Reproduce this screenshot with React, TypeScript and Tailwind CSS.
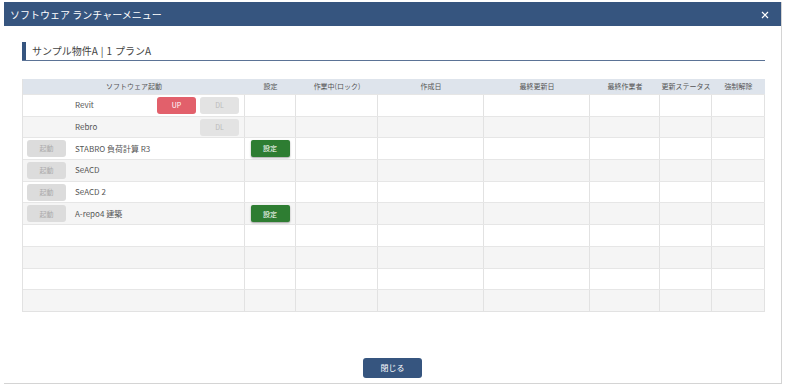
import React from "react";

const font = { fontFamily: '"Noto Sans CJK JP", "Noto Sans", sans-serif' };

type Row = { name?: string; launch?: boolean; up?: boolean; dl?: boolean; setting?: boolean };

const rows: Row[] = [
  { name: "Revit", up: true, dl: true },
  { name: "Rebro", dl: true },
  { name: "STABRO 負荷計算 R3", launch: true, setting: true },
  { name: "SeACD", launch: true },
  { name: "SeACD 2", launch: true },
  { name: "A-repo4 建築", launch: true, setting: true },
  {},
  {},
  {},
  {},
];

const cols = [
  { label: "ソフトウェア起動", w: "w-[222px]" },
  { label: "設定", w: "w-[51px]" },
  { label: "作業中(ロック)", w: "w-[82px]" },
  { label: "作成日", w: "w-[106px]" },
  { label: "最終更新日", w: "w-[106px]" },
  { label: "最終作業者", w: "w-[70px]" },
  { label: "更新ステータス", w: "w-[52px]" },
  { label: "強制解除", w: "flex-1" },
];

export default function App() {
  return (
    <div className="w-[785px] h-[387px] bg-white pt-[2px] pl-[4px] pr-[3px] overflow-hidden" style={font}>
      <div className="h-[382px] flex flex-col border-r border-b border-[#d4d4d4]">
        <div className="h-[24px] bg-[#36557f] text-white text-[10px] pl-[6px] pr-[12px] flex items-center justify-between shrink-0">
          <span>ソフトウェア ランチャーメニュー</span>
          <svg width="8" height="8" viewBox="0 0 8 8" className="mt-[1px]">
            <path d="M1 1L7 7M7 1L1 7" stroke="white" strokeWidth="1.2" />
          </svg>
        </div>
        <div className="pl-[18px] pr-[16px] pt-[16px] flex-1 flex flex-col">
          <div className="h-[19px] border-b border-[#5b7396] flex">
            <div className="w-[4px] h-full bg-[#36557f]" />
            <div className="pl-[6px] text-[10px] text-[#444] leading-[17px] whitespace-nowrap">
              サンプル物件A<span className="mx-[3px]">|</span>1<span className="ml-[3px]">プランA</span>
            </div>
          </div>
          <div className="mt-[18px] border-l border-b border-[#e2e2e2] w-[743px]">
            <div className="flex h-[15px] bg-[#dee4ec] text-[7px] text-[#555]">
              {cols.map((c, i) => (
                <div key={i} className={`${c.w} flex items-center justify-center whitespace-nowrap`}>
                  {c.label}
                </div>
              ))}
            </div>
            {rows.map((r, ri) => (
              <div key={ri} className={`flex h-[21.7px] border-t border-[#e6e6e6] ${ri % 2 === 1 ? "bg-[#f5f5f5]" : "bg-white"}`}>
                <div className="w-[222px] flex items-center border-r border-[#e2e2e2] pl-[4px] relative text-[8px] text-[#555]">
                  <div className="w-[39px] h-[17px]">
                    {r.launch && (
                      <div className="w-full h-full rounded-[3px] bg-[#dcdcdc] text-[#aaa] text-[7px] flex items-center justify-center">起動</div>
                    )}
                  </div>
                  <div className="ml-[9px]">{r.name}</div>
                  {r.up && (
                    <div className="absolute left-[134px] top-[2px] w-[39px] h-[17px] rounded-[3px] bg-[#e2606b] text-white text-[7px] flex items-center justify-center">UP</div>
                  )}
                  {r.dl && (
                    <div className="absolute left-[177px] top-[2px] w-[39px] h-[17px] rounded-[3px] bg-[#e3e3e3] text-[#bbb] text-[7px] flex items-center justify-center">DL</div>
                  )}
                </div>
                <div className="w-[51px] flex items-center justify-center border-r border-[#e2e2e2]">
                  {r.setting && (
                    <div className="w-[39px] h-[17px] rounded-[2px] bg-[#2e7d32] text-white text-[7px] flex items-center justify-center shadow-[0_1px_2px_rgba(0,0,0,0.35)]">設定</div>
                  )}
                </div>
                <div className="w-[82px] border-r border-[#e2e2e2]" />
                <div className="w-[106px] border-r border-[#e2e2e2]" />
                <div className="w-[106px] border-r border-[#e2e2e2]" />
                <div className="w-[70px] border-r border-[#e2e2e2]" />
                <div className="w-[52px] border-r border-[#e2e2e2]" />
                <div className="flex-1 border-r border-[#e2e2e2]" />
              </div>
            ))}
          </div>
          <div className="flex-1" />
          <div className="flex justify-center pb-[5px] pr-[2px]">
            <div className="w-[59px] h-[20px] rounded-[3px] bg-[#36557f] text-white text-[8px] flex items-center justify-center">閉じる</div>
          </div>
        </div>
      </div>
    </div>
  );
}
